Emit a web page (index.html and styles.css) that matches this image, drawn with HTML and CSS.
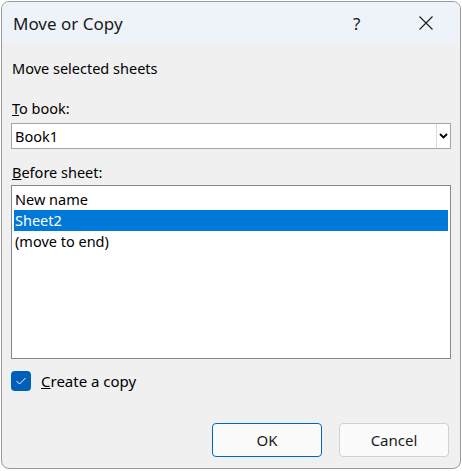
FILE: index.html
```html
<!DOCTYPE html>
<html>
<head>
<meta charset="utf-8">
<link rel="stylesheet" href="styles.css">
</head>
<body>
<div class="dialog">
  <div class="titlebar">
    <span class="title">Move or Copy</span>
    <span class="help">?</span>
    <span class="close">
      <svg width="14" height="14" viewBox="0 0 14 14"><path d="M0.5 0.5 L13.5 13.5 M13.5 0.5 L0.5 13.5" stroke="#1a1a1a" stroke-width="1.1" fill="none"/></svg>
    </span>
  </div>
  <div class="content">
    <div class="intro">Move selected sheets</div>
    <div class="label"><u>T</u>o book:</div>
    <div class="select">
      <span class="select-value">Book1</span>
      <span class="select-btn">
        <svg width="9" height="6" viewBox="0 0 9 6"><path d="M1 1 L4.5 4.5 L8 1" stroke="#000" stroke-width="1.8" fill="none"/></svg>
      </span>
    </div>
    <div class="label label2"><u>B</u>efore sheet:</div>
    <div class="listbox">
      <div class="item">New name</div>
      <div class="item selected">Sheet2</div>
      <div class="item">(move to end)</div>
    </div>
    <div class="check-row">
      <span class="checkbox">
        <svg width="12" height="10" viewBox="0 0 12 10"><path d="M1.5 5 L4.5 8 L10.5 2" stroke="#fff" stroke-width="1" fill="none"/></svg>
      </span>
      <span class="check-label"><u>C</u>reate a copy</span>
    </div>
    <div class="buttons">
      <button class="btn btn-ok">OK</button>
      <button class="btn">Cancel</button>
    </div>
  </div>
</div>
</body>
</html>
```

FILE: styles.css
```css
html, body {
  margin: 0;
  padding: 0;
  background: #ffffff;
}
body {
  font-family: "Noto Sans", "Open Sans", "Liberation Sans", sans-serif;
  font-size: 14.5px;
  color: #000;
}
.dialog {
  margin: 1px 0 0 1px;
  width: 460px;
  height: 468px;
  box-sizing: border-box;
  border: 1px solid #9a9a9a;
  border-radius: 8px;
  background: #f0f0f0;
  overflow: hidden;
  display: flex;
  flex-direction: column;
}
.titlebar {
  height: 42px;
  flex: none;
  background: #eef3f9;
  display: flex;
  align-items: center;
  padding-left: 11px;
}
.title {
  font-size: 17px;
  color: #1a1a1a;
  flex: 1;
}
.help {
  font-size: 17px;
  color: #1a1a1a;
  width: 66px;
}
.close {
  width: 14px;
  height: 14px;
  margin-right: 27px;
  display: flex;
}
.content {
  flex: 1;
  padding: 14px 9px 0 9px;
  display: flex;
  flex-direction: column;
}
.intro {
  height: 20px;
  line-height: 20px;
  padding-left: 1px;
}
.label {
  margin-top: 21px;
  height: 18px;
  line-height: 18px;
  padding-left: 1px;
}
.label2 {
  margin-top: 14px;
}
.select {
  margin-top: 6px;
  height: 26px;
  box-sizing: border-box;
  border: 1px solid #a6a6a6;
  background: #fff;
  display: flex;
  align-items: center;
}
.select-value {
  flex: 1;
  padding-left: 3px;
}
.select-btn {
  width: 13px;
  height: 24px;
  border-left: 1px solid #dadada;
  display: flex;
  align-items: center;
  justify-content: center;
}
.listbox {
  margin-top: 4px;
  height: 174px;
  box-sizing: border-box;
  border: 1px solid #828790;
  background: #fff;
  padding: 3px 2px 0 2px;
}
.item {
  height: 21px;
  line-height: 21px;
  padding-left: 1px;
}
.item.selected {
  background: #0078d7;
  color: #fff;
}
.check-row {
  margin-top: 12px;
  display: flex;
  align-items: center;
  height: 20px;
}
.checkbox {
  width: 20px;
  height: 20px;
  border-radius: 4px;
  background: #005fb8;
  display: flex;
  align-items: center;
  justify-content: center;
}
.check-label {
  margin-left: 10px;
  font-size: 15px;
}
.buttons {
  margin-top: 32px;
  margin-right: 2px;
  display: flex;
  justify-content: flex-end;
  gap: 17px;
}
.btn {
  width: 110px;
  height: 34px;
  box-sizing: border-box;
  border: 1px solid #d1d1d1;
  border-radius: 4px;
  background: #fbfbfb;
  font-family: inherit;
  font-size: 15px;
  color: #1a1a1a;
  padding: 0;
}
.btn-ok {
  border: 1px solid #0067c0;
}
```
